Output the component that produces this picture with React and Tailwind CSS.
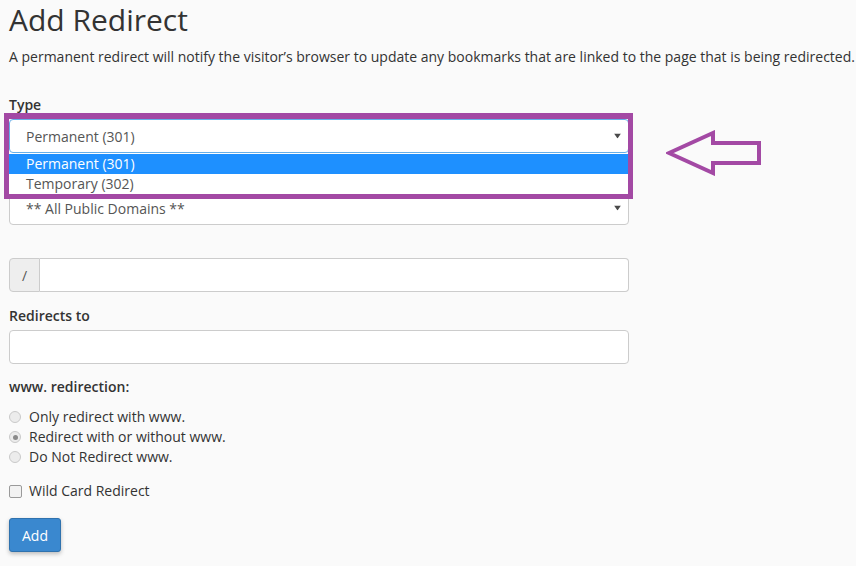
import { useState } from 'react';

const Radio = ({ checked, label }) => (
  <label className="flex items-center h-[20px] leading-[20px]">
    <span className="w-[12px] h-[12px] rounded-full border border-[#c9c9c9] bg-[#ececec] flex items-center justify-center shrink-0">
      {checked && <span className="w-[5px] h-[5px] rounded-full bg-[#8a8a8a]" />}
    </span>
    <span className="ml-[8px]">{label}</span>
  </label>
);

const Caret = () => (
  <svg width="7" height="5" viewBox="0 0 7 5" className="absolute right-[7px] top-1/2 -translate-y-1/2">
    <path d="M0 0 H7 L3.5 5 Z" fill="#4a4a4a" />
  </svg>
);

const App = () => {
  const [www] = useState('both');

  return (
    <div
      className="min-h-[566px] w-[856px] bg-[#fafafa] text-[#333] text-[14px] pl-[9px] pt-[2px] overflow-hidden"
      style={{ fontFamily: '"Open Sans", "Liberation Sans", sans-serif' }}
    >
      <h1 className="text-[30px] leading-[36px] font-normal text-[#333]">Add Redirect</h1>
      <p className="mt-[9px] leading-[20px] whitespace-nowrap">
        A permanent redirect will notify the visitor’s browser to update any bookmarks that are linked to the page that is being redirected.
      </p>

      <div className="w-[620px]">
        {/* Type */}
        <div className="mt-[28px]">
          <div className="font-semibold leading-[20px] h-[20px]">Type</div>
          <div className="relative mt-[4px]">
            <div className="relative h-[34px] bg-white border border-[#66afe9] rounded-[4px] pl-[16px] flex items-center text-[#555]">
              Permanent (301)
              <Caret />
            </div>

            {/* open dropdown list */}
            <div className="absolute left-0 top-[34px] w-[619px] bg-white pt-[1px] z-10">
              <div className="h-[20px] leading-[20px] pl-[17px] bg-[#1e90ff] text-white">Permanent (301)</div>
              <div className="h-[20px] leading-[20px] pl-[17px] text-[#555]">Temporary (302)</div>
            </div>

            {/* highlight box */}
            <div className="absolute left-[-5px] top-[-6px] w-[629px] h-[86px] border-[5px] border-t-[6px] border-[#a349a4] z-20" />

            {/* arrow */}
            <svg
              width="96"
              height="46"
              viewBox="0 0 96 46"
              className="absolute left-[657px] top-[11px] z-20"
            >
              <path
                d="M3 23 L47 3 L47 13 L93 13 L93 33 L47 33 L47 43 Z"
                fill="none"
                stroke="#a349a4"
                strokeWidth="4"
                strokeLinejoin="miter"
              />
            </svg>
          </div>
        </div>

        {/* Domain */}
        <div className="mt-[38px]">
          <div className="relative h-[34px] bg-white border border-[#ccc] rounded-[4px] pl-[16px] flex items-center text-[#555]">
            ** All Public Domains **
            <Caret />
          </div>
        </div>

        {/* Path */}
        <div className="mt-[33px] flex h-[34px]">
          <div className="w-[31px] bg-[#eee] border border-[#ccc] rounded-l-[4px] flex items-center justify-center text-[#555]">
            /
          </div>
          <div className="flex-1 bg-white border border-l-0 border-[#ccc] rounded-r-[4px]" />
        </div>

        {/* Redirects to */}
        <div className="mt-[14px]">
          <div className="font-semibold leading-[20px] h-[20px]">Redirects to</div>
          <div className="mt-[4px] h-[34px] bg-white border border-[#ccc] rounded-[4px]" />
        </div>

        {/* www redirection */}
        <div className="mt-[13px]">
          <div className="font-semibold leading-[20px] h-[20px]">www. redirection:</div>
          <div className="mt-[10px] flex flex-col">
            <Radio checked={www === 'only'} label="Only redirect with www." />
            <Radio checked={www === 'both'} label="Redirect with or without www." />
            <Radio checked={www === 'none'} label="Do Not Redirect www." />
          </div>
        </div>

        {/* Wild card */}
        <label className="mt-[14px] flex items-center h-[20px] leading-[20px]">
          <span className="w-[13px] h-[13px] rounded-[2px] border border-[#9a9a9a] bg-[#f2f2f2] shrink-0" />
          <span className="ml-[7px]">Wild Card Redirect</span>
        </label>

        <button className="mt-[17px] h-[34px] px-[12px] bg-[#3a88cf] border border-[#2f72ae] rounded-[3px] text-white shadow-[0_2px_4px_rgba(0,0,0,0.25)]">
          Add
        </button>
      </div>
    </div>
  );
};

export default App;
